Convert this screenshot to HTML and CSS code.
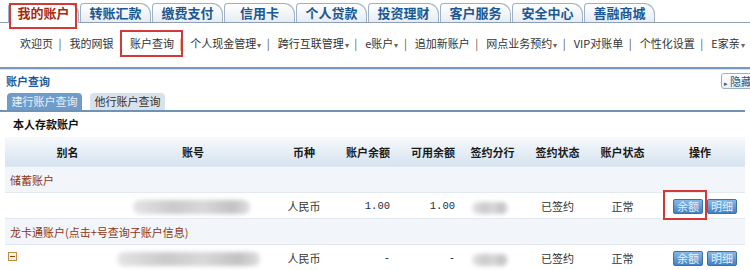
FILE: index.html
```html
<!DOCTYPE html>
<html lang="zh-CN">
<head>
    <meta charset="UTF-8">
    <meta name="viewport" content="width=device-width, initial-scale=1.0">
    <title>我的账户 - 账户查询</title>
    <link rel="stylesheet" href="styles.css">
</head>
<body>
    <div class="topnav">
        <a class="tab active">我的账户</a>
        <a class="tab">转账汇款</a>
        <a class="tab">缴费支付</a>
        <a class="tab">信用卡</a>
        <a class="tab">个人贷款</a>
        <a class="tab">投资理财</a>
        <a class="tab">客户服务</a>
        <a class="tab">安全中心</a>
        <a class="tab">善融商城</a>
    </div>

    <div class="subnav">
        <a>欢迎页</a><span class="sep">|</span>
        <a>我的网银</a><span class="sep">|</span>
        <a class="current">账户查询</a><span class="sep">|</span>
        <a>个人现金管理<i class="arr">▾</i></a><span class="sep">|</span>
        <a>跨行互联管理<i class="arr">▾</i></a><span class="sep">|</span>
        <a>e账户<i class="arr">▾</i></a><span class="sep">|</span>
        <a>追加新账户</a><span class="sep">|</span>
        <a>网点业务预约<i class="arr">▾</i></a><span class="sep">|</span>
        <a>VIP对账单</a><span class="sep">|</span>
        <a>个性化设置</a><span class="sep">|</span>
        <a>E家亲<i class="arr">▾</i></a><span class="sep">|</span>
    </div>

    <div class="main">
        <div class="title-row">
            <h2>账户查询</h2>
            <button class="hide-btn"><i class="tri">▸</i>隐藏</button>
        </div>
        <div class="subtabs">
            <span class="subtab on">建行账户查询</span>
            <span class="subtab">他行账户查询</span>
        </div>
        <h3>本人存款账户</h3>

        <table class="acct">
            <colgroup>
                <col class="c1"><col class="c2"><col class="c3"><col class="c4"><col class="c5">
                <col class="c6"><col class="c7"><col class="c8"><col class="c9">
            </colgroup>
            <thead>
                <tr>
                    <th>别名</th>
                    <th>账号</th>
                    <th class="cur">币种</th>
                    <th class="num">账户余额</th>
                    <th class="num">可用余额</th>
                    <th>签约分行</th>
                    <th>签约状态</th>
                    <th>账户状态</th>
                    <th>操作</th>
                </tr>
            </thead>
            <tbody>
                <tr class="group">
                    <td colspan="9">储蓄账户</td>
                </tr>
                <tr>
                    <td></td>
                    <td class="no"><span class="blur b1"></span></td>
                    <td class="cur">人民币</td>
                    <td class="num">1.00</td>
                    <td class="num">1.00</td>
                    <td class="branch"><span class="blur b3"></span></td>
                    <td>已签约</td>
                    <td>正常</td>
                    <td class="ops"><span class="btn marked">余额</span><span class="btn">明细</span></td>
                </tr>
                <tr class="group">
                    <td colspan="9">龙卡通账户(点击+号查询子账户信息)</td>
                </tr>
                <tr>
                    <td class="tog"><span class="minus"></span></td>
                    <td class="no"><span class="blur b2"></span></td>
                    <td class="cur">人民币</td>
                    <td class="num">-</td>
                    <td class="num">-</td>
                    <td class="branch"><span class="blur b3"></span></td>
                    <td>已签约</td>
                    <td>正常</td>
                    <td class="ops"><span class="btn">余额</span><span class="btn">明细</span></td>
                </tr>
            </tbody>
        </table>
    </div>
</body>
</html>
```

FILE: styles.css
```css
html, body {
    margin: 0;
    overflow: hidden;
}
body {
    width: 750px;
    font-family: "Noto Sans CJK SC", "Noto Sans", sans-serif;
    font-size: 11px;
    color: #333;
    background: #fff;
}
a {
    text-decoration: none;
    color: inherit;
}

/* top tabs */
.topnav {
    display: flex;
    gap: 1px;
    padding: 3px 0 0 8px;
    height: 19px;
    border-bottom: 1px solid #8d9fb2;
}
.tab {
    position: relative;
    width: 71px;
    height: 19px;
    box-sizing: border-box;
    border: 1px solid #9fb0c2;
    border-bottom: none;
    border-radius: 4px 11px 0 0;
    background: linear-gradient(#ffffff, #e6ecf2);
    color: #1b5891;
    font-weight: bold;
    font-size: 13px;
    line-height: 18px;
    text-align: center;
}
.tab.active {
    height: 20px;
    margin-bottom: -1px;
    background: #fff;
    color: #a7290d;
}
.tab.active::after {
    content: "";
    position: absolute;
    top: -1px;
    left: 0;
    right: 1px;
    bottom: -6px;
    border: 2px solid #d23a3a;
}

/* second menu */
.subnav {
    height: 44px;
    box-sizing: border-box;
    padding: 12px 0 0 20px;
    line-height: 16px;
    white-space: nowrap;
    color: #333;
}
.subnav a {
    display: inline-block;
}
.subnav .current {
    position: relative;
}
.subnav .current::after {
    content: "";
    position: absolute;
    top: -5px;
    bottom: -6px;
    left: -10px;
    right: -9px;
    border: 2px solid #d23a3a;
}
.sep {
    margin: 0 5.5px;
    color: #555;
}
.arr {
    font-style: normal;
    font-size: 8px;
    color: #666;
    margin-left: 1px;
}

/* page body */
.main {
    border-top: 2px solid #7898bc;
    box-shadow: inset 0 1px #d3e0ee;
}
.title-row {
    display: flex;
    justify-content: space-between;
    align-items: center;
    height: 24px;
}
h2 {
    margin: 0 0 0 6px;
    font-size: 11px;
    color: #1d5c98;
}
.hide-btn {
    height: 16px;
    margin-right: -8px;
    padding: 0 5px 0 2px;
    border: 1px solid #9cb1c6;
    border-radius: 3px;
    background: linear-gradient(#ffffff, #e9eff5);
    font-family: inherit;
    font-size: 11px;
    line-height: 14px;
    color: #2a5583;
}
.tri {
    font-style: normal;
    font-size: 7px;
    margin-right: 2px;
    color: #555;
}

.subtabs {
    display: flex;
    gap: 8px;
    height: 17px;
    margin-right: 5px;
    padding-left: 7px;
    border-bottom: 2px solid #6f92b7;
}
.subtab {
    width: 75px;
    border-radius: 4px 4px 0 0;
    background: #d8e2eb;
    text-align: center;
    line-height: 17px;
    color: #333;
}
.subtab.on {
    background: #6e9dcb;
    color: #e8f1fa;
}

h3 {
    margin: 0;
    padding-left: 13px;
    font-size: 11px;
    line-height: 25px;
    color: #111;
}

/* accounts table */
.acct {
    margin: 0 5px;
    width: 740px;
    table-layout: fixed;
    border-collapse: collapse;
}
.c1 { width: 125px; }
.c2 { width: 126px; }
.c3 { width: 84px; }
.c4 { width: 55px; }
.c5 { width: 65px; }
.c6 { width: 65px; }
.c7 { width: 65px; }
.c8 { width: 65px; }
.c9 { width: 90px; }

.acct th {
    height: 29px;
    padding: 0;
    background: linear-gradient(#f6f9fc, #d6e3f0);
    font-size: 11px;
    color: #1a1a1a;
    text-align: center;
}
.acct td {
    height: 25px;
    padding: 0;
    text-align: center;
    white-space: nowrap;
    border-top: 1px solid #e2e9f1;
}
.acct .cur {
    padding-left: 12px;
}
.acct .num {
    text-align: right;
    padding-right: 5px;
}
.acct td.num {
    font-family: "Liberation Mono", monospace;
    font-size: 10.5px;
    color: #1f2d4d;
}
.group td {
    background: #f2f6fa;
    text-align: left;
    padding-left: 5px;
    color: #8e3516;
}
.acct td.no,
.acct td.branch,
.acct td.tog {
    text-align: left;
}
.acct td.tog {
    padding-left: 3px;
}

.minus {
    display: inline-block;
    position: relative;
    width: 7px;
    height: 7px;
    border: 1px solid #c48a43;
    background: #fff3da;
    vertical-align: 2px;
}
.minus::after {
    content: "";
    position: absolute;
    left: 1px;
    right: 1px;
    top: 3px;
    height: 1px;
    background: #7a4d17;
}

.blur {
    display: inline-block;
    height: 14px;
    border-radius: 7px;
    background: linear-gradient(90deg, #e4e4e4, #cacaca 35%, #d8d8d8 60%, #c2c2c2 85%, #dedede);
    filter: blur(2px);
    vertical-align: middle;
}
.b1 { width: 117px; margin-left: 3px; }
.b2 { width: 143px; margin-left: -13px; }
.b3 { width: 36px; margin-left: 12px; height: 12px; }

.ops {
    padding-left: 10px !important;
}
.btn {
    display: inline-block;
    position: relative;
    height: 15px;
    box-sizing: border-box;
    padding: 0 3px;
    margin: 0 2px;
    border: 1px solid #3d72a8;
    border-radius: 2px;
    background: linear-gradient(#86b8e6, #4281c2);
    color: #e4f0fb;
    font-size: 11px;
    line-height: 13px;
    vertical-align: middle;
}
.btn.marked::after {
    content: "";
    position: absolute;
    top: -10px;
    bottom: -7px;
    left: -11px;
    right: -5px;
    border: 2px solid #d23a3a;
}
```
